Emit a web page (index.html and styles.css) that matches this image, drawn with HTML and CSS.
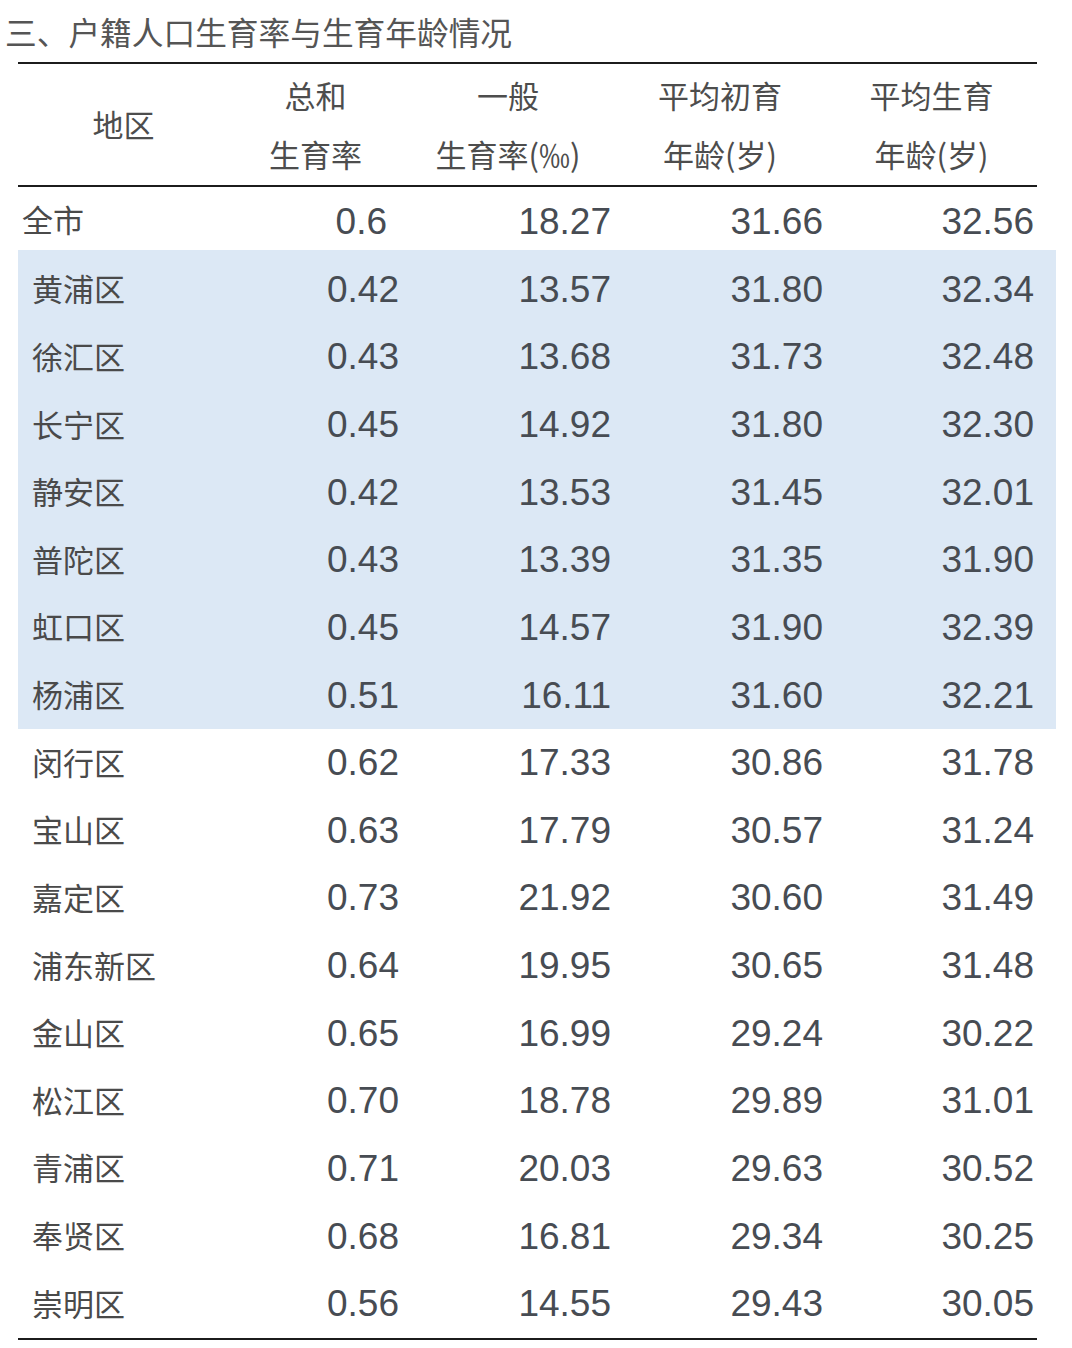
FILE: index.html
```html
<!DOCTYPE html>
<html lang="zh-CN">
<head>
<meta charset="utf-8">
<title>户籍人口生育率与生育年龄情况</title>
<link rel="stylesheet" href="styles.css">
</head>
<body>
<h1 class="title">三、户籍人口生育率与生育年龄情况</h1>
<div class="table">
  <div class="head">
    <div class="hcell hname">地区</div>
    <div class="hcell"><span>总和</span><span>生育率</span></div>
    <div class="hcell"><span>一般</span><span>生育率(‰)</span></div>
    <div class="hcell"><span>平均初育</span><span>年龄(岁)</span></div>
    <div class="hcell"><span>平均生育</span><span>年龄(岁)</span></div>
  </div>
  <div class="row row-all">
    <div class="name name-all">全市</div>
    <div class="num num-short">0.6</div>
    <div class="num">18.27</div>
    <div class="num">31.66</div>
    <div class="num">32.56</div>
  </div>
  <div class="band">
    <div class="row"><div class="name">黄浦区</div><div class="num">0.42</div><div class="num">13.57</div><div class="num">31.80</div><div class="num">32.34</div></div>
    <div class="row"><div class="name">徐汇区</div><div class="num">0.43</div><div class="num">13.68</div><div class="num">31.73</div><div class="num">32.48</div></div>
    <div class="row"><div class="name">长宁区</div><div class="num">0.45</div><div class="num">14.92</div><div class="num">31.80</div><div class="num">32.30</div></div>
    <div class="row"><div class="name">静安区</div><div class="num">0.42</div><div class="num">13.53</div><div class="num">31.45</div><div class="num">32.01</div></div>
    <div class="row"><div class="name">普陀区</div><div class="num">0.43</div><div class="num">13.39</div><div class="num">31.35</div><div class="num">31.90</div></div>
    <div class="row"><div class="name">虹口区</div><div class="num">0.45</div><div class="num">14.57</div><div class="num">31.90</div><div class="num">32.39</div></div>
    <div class="row"><div class="name">杨浦区</div><div class="num">0.51</div><div class="num">16.11</div><div class="num">31.60</div><div class="num">32.21</div></div>
  </div>
  <div class="row"><div class="name">闵行区</div><div class="num">0.62</div><div class="num">17.33</div><div class="num">30.86</div><div class="num">31.78</div></div>
  <div class="row"><div class="name">宝山区</div><div class="num">0.63</div><div class="num">17.79</div><div class="num">30.57</div><div class="num">31.24</div></div>
  <div class="row"><div class="name">嘉定区</div><div class="num">0.73</div><div class="num">21.92</div><div class="num">30.60</div><div class="num">31.49</div></div>
  <div class="row"><div class="name">浦东新区</div><div class="num">0.64</div><div class="num">19.95</div><div class="num">30.65</div><div class="num">31.48</div></div>
  <div class="row"><div class="name">金山区</div><div class="num">0.65</div><div class="num">16.99</div><div class="num">29.24</div><div class="num">30.22</div></div>
  <div class="row"><div class="name">松江区</div><div class="num">0.70</div><div class="num">18.78</div><div class="num">29.89</div><div class="num">31.01</div></div>
  <div class="row"><div class="name">青浦区</div><div class="num">0.71</div><div class="num">20.03</div><div class="num">29.63</div><div class="num">30.52</div></div>
  <div class="row"><div class="name">奉贤区</div><div class="num">0.68</div><div class="num">16.81</div><div class="num">29.34</div><div class="num">30.25</div></div>
  <div class="row row-last"><div class="name">崇明区</div><div class="num">0.56</div><div class="num">14.55</div><div class="num">29.43</div><div class="num">30.05</div></div>
</div>
</body>
</html>
```
FILE: styles.css
```css
html, body {
  margin: 0;
  padding: 0;
  background: #ffffff;
}

body {
  width: 1072px;
  color: #474747;
  font-family: "Noto Sans CJK SC", "Noto Sans", sans-serif;
}

.title {
  margin: 0;
  padding: 10px 0 0 5px;
  height: 43px;
  line-height: 42px;
  font-size: 31.7px;
  font-weight: 400;
  color: #555555;
}

.table {
  margin: 9px 0 0 18px;
  width: 1019px;
  border-top: 2px solid #1c1c1c;
}

.head,
.row {
  display: grid;
  grid-template-columns: 211px 173px 212px 212px 211px;
}

.head {
  height: 121px;
  border-bottom: 2px solid #1c1c1c;
}

.hcell {
  display: flex;
  flex-direction: column;
  align-items: center;
  padding-top: 1px;
  font-size: 31px;
  line-height: 59px;
  color: #4d4d4d;
}

.hcell.hname {
  justify-content: center;
  padding-top: 0;
  padding-bottom: 2px;
  line-height: 40px;
}

.row {
  height: 67.625px;
  align-items: center;
}

.row-all {
  height: 63px;
  align-items: end;
}

.row-all > div {
  padding-bottom: 8px;
}

.band {
  margin-right: -19px;
  padding-right: 19px;
  padding-top: 6px;
  background: #dce8f5;
}

.row-last {
  border-bottom: 2px solid #1c1c1c;
}

.name {
  padding-left: 14px;
  padding-bottom: 3px;
  font-size: 31px;
  line-height: 40px;
  color: #4a4a4a;
}

.row-all > .name.name-all {
  padding-left: 4px;
  padding-bottom: 11px;
}

.num {
  text-align: right;
  padding-right: 3px;
  font-family: "Liberation Sans", Arial, sans-serif;
  font-size: 37px;
  line-height: 40px;
  color: #474c53;
}

.num.num-short {
  padding-right: 15px;
}
```
